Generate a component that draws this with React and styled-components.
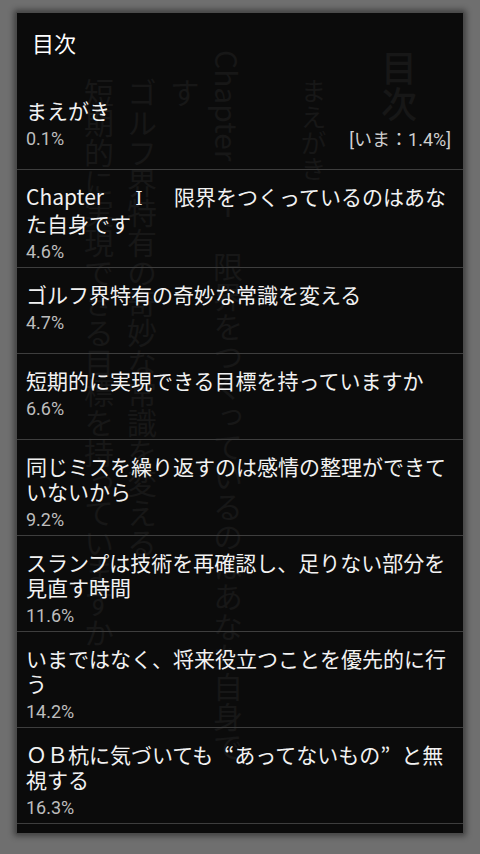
import React from "react";
import styled, { createGlobalStyle } from "styled-components";

const GlobalStyle = createGlobalStyle`
  html, body {
    margin: 0;
    padding: 0;
    background: #6f6f6f;
  }
  #root {
    min-height: 854px;
  }
`;

const Screen = styled.div`
  width: 480px;
  height: 854px;
  box-sizing: border-box;
  padding: 12px 16px 20px;
  display: flex;
`;

const Dialog = styled.section`
  position: relative;
  flex: 1;
  display: flex;
  flex-direction: column;
  overflow: hidden;
  background: #0b0b0b;
  border: 1px solid #4a4a4a;
  box-shadow: 0 0 6px 2px rgba(0, 0, 0, 0.45);
  font-family: "Noto Sans CJK JP", sans-serif;
`;

// the page underneath, written top to bottom, shows faintly through
const PageBehind = styled.div`
  position: absolute;
  top: 37px;
  right: 44px;
  height: 770px;
  writing-mode: vertical-rl;
  color: #171717;
  font-family: "Noto Sans CJK JP", sans-serif;
  font-size: 30px;
  line-height: 43px;
  white-space: nowrap;
  pointer-events: none;
`;

const BehindTitle = styled.div`
  font-size: 36px;
  line-height: 40px;
  font-weight: 500;
  margin-left: 44px;
`;

const BehindLine = styled.div`
  padding-top: ${(p) => (p.indent ? "28px" : "0")};
  font-size: ${(p) => p.size || 30}px;
`;

const Header = styled.header`
  position: relative;
  height: 71px;
  box-sizing: border-box;
  padding: 14px 16px 0 15px;
  color: #ffffff;
  font-size: 22px;
  line-height: 30px;
`;

const List = styled.ul`
  position: relative;
  list-style: none;
  margin: 0;
  padding: 0;
`;

const Item = styled.li`
  min-height: 86px;
  box-sizing: border-box;
  padding: 14px 11px 1px 9px;
  border-bottom: 1px solid #3e3e3e;
`;

const Title = styled.div`
  color: #f2f2f2;
  font-size: 21px;
  line-height: 25px;
`;

// full-width quote marks, as the Japanese reader sets them
const Quote = styled.span`
  display: inline-block;
  width: 1em;
  text-align: ${(p) => (p.close ? "left" : "right")};
`;

const Numeral = styled.span`
  display: inline-block;
  width: 28px;
  text-align: center;
  font-family: "DejaVu Serif", "Liberation Serif", serif;
  font-size: 19px;
`;

const Meta = styled.div`
  display: flex;
  justify-content: space-between;
  align-items: center;
  height: 30px;
  font-family: Roboto, "Noto Sans CJK JP", sans-serif;
  font-size: 18px;
`;

const Percent = styled.span`
  color: #bdbdbd;
`;

const Current = styled.span`
  color: #cfcfcf;
  margin-right: 1px;
`;

const chapters = [
  { title: "まえがき", pct: "0.1%", current: "[いま：1.4%]" },
  {
    title: (
      <>
        Chapter　<Numeral>I</Numeral>　限界をつくっているのはあなた自身です
      </>
    ),
    pct: "4.6%",
  },
  { title: "ゴルフ界特有の奇妙な常識を変える", pct: "4.7%" },
  { title: "短期的に実現できる目標を持っていますか", pct: "6.6%" },
  { title: "同じミスを繰り返すのは感情の整理ができていないから", pct: "9.2%" },
  { title: "スランプは技術を再確認し、足りない部分を見直す時間", pct: "11.6%" },
  { title: "いまではなく、将来役立つことを優先的に行う", pct: "14.2%" },
  {
    title: (
      <>
        ＯＢ杭に気づいても<Quote>“</Quote>あってないもの<Quote close>”</Quote>と無視する
      </>
    ),
    pct: "16.3%",
  },
];

const App = () => {
  return (
    <>
      <GlobalStyle />
      <Screen>
        <Dialog>
          <PageBehind aria-hidden="true">
            <BehindTitle>目次</BehindTitle>
            <BehindLine indent size={26}>まえがき</BehindLine>
            <BehindLine style={{ marginRight: 43 }}>
              Chapter　Ⅰ　限界をつくっているのはあなた自身で
            </BehindLine>
            <BehindLine indent>す</BehindLine>
            <BehindLine indent>ゴルフ界特有の奇妙な常識を変える</BehindLine>
            <BehindLine indent>短期的に実現できる目標を持っていますか</BehindLine>
          </PageBehind>
          <Header>目次</Header>
          <List>
            {chapters.map((c) => (
              <Item key={c.pct}>
                <Title>{c.title}</Title>
                <Meta>
                  <Percent>{c.pct}</Percent>
                  {c.current && <Current>{c.current}</Current>}
                </Meta>
              </Item>
            ))}
          </List>
        </Dialog>
      </Screen>
    </>
  );
};

export default App;
